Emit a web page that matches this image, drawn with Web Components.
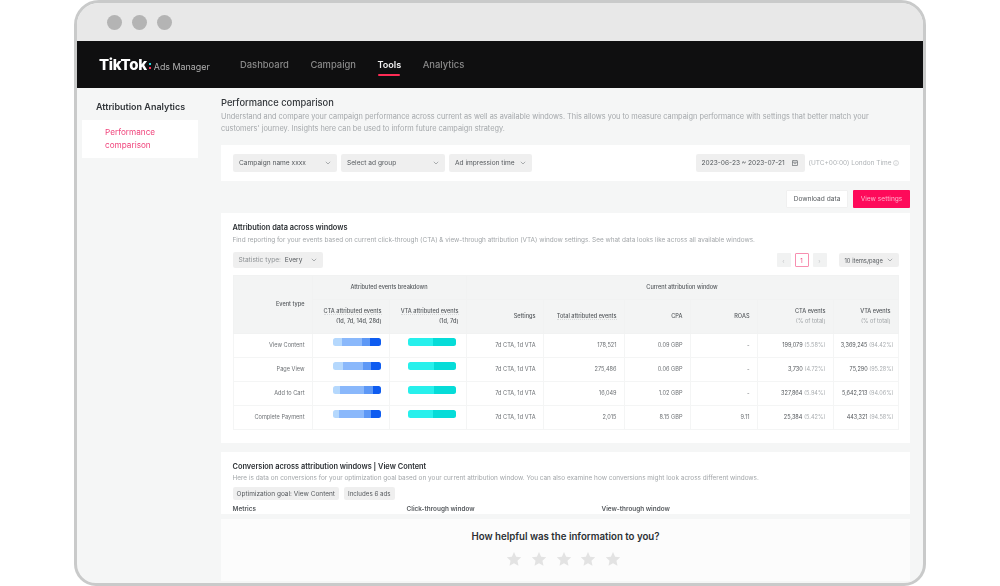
<!DOCTYPE html>
<html>
<head>
<meta charset="utf-8">
<style>
html, body { margin: 0; padding: 0; background: #fff; overflow: hidden; }
body { width: 1000px; height: 586px; font-family: Inter, "Liberation Sans", sans-serif; color: #2b2f33; }
</style>
</head>
<body>
<app-window>
  <top-nav slot="nav"></top-nav>
  <side-menu slot="side"></side-menu>
  <compare-page slot="main"></compare-page>
</app-window>

<script>
class AppWindow extends HTMLElement {
  constructor() {
    super()
    this.attachShadow({ mode: 'open' })
    this.shadowRoot.innerHTML = `
      <style>
        :host { display: block; width: 852px; height: 586px; margin-left: 74px; }
        .frame { box-sizing: border-box; height: 586px; border: 3px solid #c9caca; border-radius: 25px 25px 22px 22px; overflow: hidden; background: #f5f6f6; display: flex; flex-direction: column; }
        .bar { height: 38px; flex: none; background: #e8e8e8; display: flex; align-items: center; gap: 10px; padding: 0 0 0 30px; }
        .bar i { width: 15px; height: 15px; border-radius: 50%; background: #b4b4b4; }
        .body { flex: 1; display: flex; min-height: 0; filter: blur(.5px); }
        .side { width: 144px; flex: none; }
      </style>
      <div class="frame">
        <div class="bar"><i></i><i></i><i></i></div>
        <slot name="nav"></slot>
        <div class="body">
          <div class="side"><slot name="side"></slot></div>
          <slot name="main"></slot>
        </div>
      </div>
    `
  }
}

class TopNav extends HTMLElement {
  constructor() {
    super()
    this.attachShadow({ mode: 'open' })
    this.shadowRoot.innerHTML = `
      <style>
        :host { display: flex; flex: none; height: 47px; background: #0f0f10; align-items: center; padding-left: 22px; color: #8a8a8a; font-size: 9.4px; filter: blur(.4px); }
        .logo { display: flex; align-items: baseline; width: 141px; color: #b0b0b0; font-size: 8.9px; white-space: nowrap; }
        .logo b { color: #fff; font-size: 15px; font-weight: 800; letter-spacing: -.3px; }
        .logo u { display: flex; flex-direction: column; gap: 2px; margin: 0 3px 0 2px; align-self: center; padding-top: 3px; }
        .logo u i { width: 2px; height: 2px; background: #25d8e0; }
        .logo u i + i { background: #fe2c55; }
        nav { display: flex; gap: 21.5px; font-weight: 500; }
        a { position: relative; }
        a.on { color: #f1f1f1; font-weight: 600; font-size: 9.1px; }
        a.on::after { content: ""; position: absolute; left: 1px; right: 1px; top: 15px; height: 2px; background: #fe2c55; border-radius: 1px; }
      </style>
      <div class="logo"><b>TikTok</b><u><i></i><i></i></u>Ads Manager</div>
      <nav><a>Dashboard</a><a>Campaign</a><a class="on">Tools</a><a>Analytics</a></nav>
    `
  }
}

class SideMenu extends HTMLElement {
  constructor() {
    super()
    this.attachShadow({ mode: 'open' })
    this.shadowRoot.innerHTML = `
      <style>
        :host { display: block; padding: 11px 0 0 5px; }
        h3 { margin: 1px 0 6px 14px; font-size: 9px; line-height: 14px; font-weight: 600; color: #33373b; }
        div { width: 116px; height: 38px; box-sizing: border-box; background: #fff; padding: 6px 0 0 23px; font-size: 8.2px; line-height: 13px; color: #f0457c; }
      </style>
      <h3>Attribution Analytics</h3>
      <div>Performance<br>comparison</div>
    `
  }
}

// small grey pill used for the select boxes and tags
class PillBox extends HTMLElement {
  constructor() {
    super()
    this.attachShadow({ mode: 'open' })
    const caret = this.hasAttribute('caret') ? `<svg width="6" height="4" viewBox="0 0 6 4"><path d="M.8.8 3 3 5.2.8" fill="none" stroke="#8b8f92" stroke-width=".7"/></svg>` : ''
    this.shadowRoot.innerHTML = `
      <style>
        :host { display: inline-flex; align-items: center; justify-content: space-between; box-sizing: border-box; background: rgba(0, 0, 0, .063); border-radius: 2px; padding: 0 6px; height: 18px; font-size: 6.6px; color: #55595d; white-space: nowrap; }
      </style>
      <span><slot></slot></span>${caret}
    `
  }
}

class StackBar extends HTMLElement {
  constructor() {
    super()
    this.attachShadow({ mode: 'open' })
    const parts = this.getAttribute('parts').split(',').map(p => {
      const [w, c] = p.split(':')
      return `<i style="width:${w}px;background:${c}"></i>`
    }).join('')
    this.shadowRoot.innerHTML = `
      <style>
        :host { display: flex; height: 8px; width: 48px; margin-left: auto; border-radius: 2.5px; overflow: hidden; }
        i { display: block; height: 100%; }
      </style>
      ${parts}
    `
  }
}

class AttributionTable extends HTMLElement {
  constructor() {
    super()
    this.attachShadow({ mode: 'open' })
    const L = '#b5d8fd', M = '#8ab8fb', D = '#5d98f6', B = '#0e5cf0', T1 = '#27f0ec', T2 = '#06dcd8'
    const cta = (a, b, c, d) => `<stack-bar parts="${a}:${L},${b}:${M},${c}:${D},${d}:${B}"></stack-bar>`
    const vta = a => `<stack-bar parts="${a}:${T1},${48 - a}:${T2}"></stack-bar>`
    const rows = [
      ['View Content', cta(9, 20, 8, 11), vta(25), '178,521', '0.09 GBP', '-', '199,079', '(5.58%)', '3,369,245', '(94.42%)'],
      ['Page View', cta(10, 20, 8, 10), vta(26), '275,486', '0.06 GBP', '-', '3,730', '(4.72%)', '75,290', '(95.28%)'],
      ['Add to Cart', cta(7, 24, 9, 8), vta(26), '16,049', '1.02 GBP', '-', '327,864', '(5.94%)', '5,642,213', '(94.06%)'],
      ['Complete Payment', cta(6, 25, 7, 10), vta(25), '2,015', '8.15 GBP', '9.11', '25,384', '(5.42%)', '443,321', '(94.58%)']
    ]
    const body = rows.map(r => `
      <tr>
        <td>${r[0]}</td><td class="c">${r[1]}</td><td class="c v">${r[2]}</td>
        <td>7d CTA, 1d VTA</td><td>${r[3]}</td><td>${r[4]}</td><td>${r[5]}</td>
        <td><b>${r[6]}</b> <em>${r[7]}</em></td><td><b>${r[8]}</b> <em>${r[9]}</em></td>
      </tr>`).join('')
    this.shadowRoot.innerHTML = `
      <style>
        :host { display: block; }
        table { border-collapse: collapse; table-layout: fixed; width: 665px; font-size: 5.6px; color: #6c7074; }
        th { background: #f3f4f4; font-weight: 500; color: #55595d; padding: 0; border: 1px solid #f1f2f2; line-height: 9.5px; }
        td { box-sizing: border-box; padding: 0 7px 2px 0; height: 24px; line-height: 8px; text-align: right; border: 1px solid #f4f5f5; white-space: nowrap; }
        th.r { text-align: right; padding-right: 7px; }
        td.c { padding: 0 8px 7px 0; }
        td.v { padding-right: 9.5px; }
        b { font-weight: 400; color: #55595d; } em { font-style: normal; color: #a9adb0; }
        .h1 { height: 24px; } .h2 { height: 34px; }
        span.d { border-bottom: 1px dotted #d8dadb; }
        td:last-child { padding-right: 4px; font-size: 5.5px; }
        th small { font-size: inherit; color: #a0a4a7; font-weight: 400; }
      </style>
      <table>
        <colgroup><col style="width:79px"><col style="width:77px"><col style="width:77px"><col style="width:77px"><col style="width:81px"><col style="width:66px"><col style="width:67px"><col style="width:76px"><col style="width:65px"></colgroup>
        <tr class="h1">
          <th rowspan="2" class="r">Event type</th>
          <th colspan="2">Attributed events breakdown</th>
          <th colspan="6">Current attribution window</th>
        </tr>
        <tr class="h2">
          <th class="r"><span class="d">CTA attributed events</span><br>(1d, 7d, 14d, 28d)</th>
          <th class="r"><span class="d">VTA attributed events</span><br>(1d, 7d)</th>
          <th class="r">Settings</th>
          <th class="r"><span class="d">Total attributed events</span></th>
          <th class="r">CPA</th>
          <th class="r">ROAS</th>
          <th class="r">CTA events<br><small>(% of total)</small></th>
          <th class="r">VTA events<br><small>(% of total)</small></th>
        </tr>
        ${body}
      </table>
    `
  }
}

class ComparePage extends HTMLElement {
  constructor() {
    super()
    this.attachShadow({ mode: 'open' })
    this.shadowRoot.innerHTML = `
      <style>
        :host { display: flex; flex-direction: column; width: 689px; position: relative; overflow: hidden; }
        h1 { margin: 8px 0 0; font-size: 9.3px; line-height: 14px; font-weight: 500; color: #33373b; }
        .lead { margin: 1px 0 0; font-size: 7.33px; line-height: 12px; color: #a3a7aa; width: 670px; }
        .filters { margin-top: 10px; height: 36px; flex: none; background: #fff; display: flex; align-items: center; padding: 0 11px 0 12px; gap: 4px; }
        .tz { font-size: 6.5px; color: #aeb2b5; display: flex; align-items: center; gap: 1.5px; }
        .acts { display: flex; justify-content: flex-end; gap: 5px; margin-top: 9px; flex: none; }
        .btn { height: 18px; box-sizing: border-box; display: flex; align-items: center; justify-content: center; font-size: 6.6px; border-radius: 1px; }
        .dl { width: 62px; background: #fff; color: #55595d; border: 1px solid #f0f0f0; }
        .vs { width: 57px; background: #fe0a5a; color: #ffb3cc; }
        .card { background: #fff; margin-top: 5px; padding: 9px 11.5px 0; flex: none; box-sizing: border-box; }
        .c1 { height: 230px; }
        .c2 { height: 62px; margin-top: 9px; padding-top: 9px; overflow: hidden; }
        h2 { margin: 0; font-size: 7.4px; line-height: 11px; font-weight: 600; color: #2b2f33; }
        .sub { margin: 2px 0 0; font-size: 6.43px; line-height: 11px; color: #a3a7aa; white-space: nowrap; }
        .tools { display: flex; align-items: center; margin: 6px 0 7px; height: 16px; }
        .pager { margin-left: auto; display: flex; align-items: center; gap: 4px; font-size: 6px; color: #c4c6c8; }
        .pager i { width: 14px; height: 14px; box-sizing: border-box; background: #f1f2f2; border-radius: 1px; display: flex; align-items: center; justify-content: center; font-style: normal; }
        .pager i.on { background: #fff; border: 1px solid #f78fb0; color: #f0457c; }
        .tags { display: flex; gap: 5px; margin-top: 3px; }
        .cols { display: flex; margin-top: 5px; font-size: 6.4px; line-height: 8px; font-weight: 600; color: #55595d; }
        .feedback { position: absolute; left: 0; right: 0; bottom: 2px; height: 62px; background: #fcfcfc; display: flex; flex-direction: column; align-items: center; }
        .feedback p { margin: 11px 0 7px; font-size: 9.7px; line-height: 14px; font-weight: 600; color: #2b2f33; }
        .stars { display: flex; gap: 8.75px; margin-right: 4px; }
      </style>
      <h1>Performance comparison</h1>
      <p class="lead">Understand and compare your campaign performance across current as well as available windows. This allows you to measure campaign performance with settings that better match your customers' journey. Insights here can be used to inform future campaign strategy.</p>
      <div class="filters">
        <pill-box caret style="width:104px">Campaign name xxxx</pill-box>
        <pill-box caret style="width:104px">Select ad group</pill-box>
        <pill-box caret style="width:83px">Ad impression time</pill-box>
        <pill-box style="width:109px;margin-left:auto">2023-06-23 ~ 2023-07-21
          <svg style="vertical-align:-1px;margin-left:5px" width="6" height="6" viewBox="0 0 6 6"><rect x=".4" y=".8" width="5.2" height="4.8" fill="none" stroke="#6c7074" stroke-width=".7"/><path d="M.4 2.4h5.2M1.8 3.6h2.4M1.8 0v1.2M4.2 0v1.2" stroke="#6c7074" stroke-width=".6"/></svg></pill-box>
        <span class="tz">(UTC+00:00) London Time
          <svg width="6" height="6" viewBox="0 0 6 6"><circle cx="3" cy="3" r="2.5" fill="none" stroke="#aeb2b5" stroke-width=".5"/><path d="M3 2.6v1.8M3 1.4v.6" stroke="#aeb2b5" stroke-width=".5"/></svg></span>
      </div>
      <div class="acts"><div class="btn dl">Download data</div><div class="btn vs">View settings</div></div>
      <div class="card c1">
        <h2>Attribution data across windows</h2>
        <p class="sub">Find reporting for your events based on current click-through (CTA) &amp; view-through attribution (VTA) window settings. See what data looks like across all available windows.</p>
        <div class="tools">
          <pill-box caret style="width:90px;height:16px;color:#8c9093">Statistic type:&nbsp;&nbsp;<span style="color:#55595d">Every</span></pill-box>
          <div class="pager"><i>‹</i><i class="on">1</i><i>›</i><pill-box caret style="width:60px;height:14px;margin-left:8px;font-size:5.8px">10 items/page</pill-box></div>
        </div>
        <attribution-table></attribution-table>
      </div>
      <div class="card c2">
        <h2>Conversion across attribution windows | View Content</h2>
        <p class="sub" style="margin-top:1px">Here is data on conversions for your optimization goal based on your current attribution window. You can also examine how conversions might look across different windows.</p>
        <div class="tags"><pill-box style="height:13px;padding:0 4px;font-size:6.5px">Optimization goal: View Content</pill-box><pill-box style="height:13px;padding:0 4px;font-size:6.2px">Includes 6 ads</pill-box></div>
        <div class="cols"><span style="width:174px">Metrics</span><span style="width:195px">Click-through window</span><span>View-through window</span></div>
      </div>
      <div class="feedback">
        <p>How helpful was the information to you?</p>
        <div class="stars">${'<svg width="16" height="16" viewBox="0 0 24 24"><path d="M12 1.5l3.2 7 7.6.9-5.6 5.2 1.5 7.5L12 18.3l-6.7 3.8 1.5-7.5L1.2 9.4l7.6-.9z" fill="#e3e3e3"/></svg>'.repeat(5)}</div>
      </div>
    `
  }
}

customElements.define('app-window', AppWindow)
customElements.define('top-nav', TopNav)
customElements.define('side-menu', SideMenu)
customElements.define('pill-box', PillBox)
customElements.define('stack-bar', StackBar)
customElements.define('attribution-table', AttributionTable)
customElements.define('compare-page', ComparePage)
</script>
</body>
</html>
